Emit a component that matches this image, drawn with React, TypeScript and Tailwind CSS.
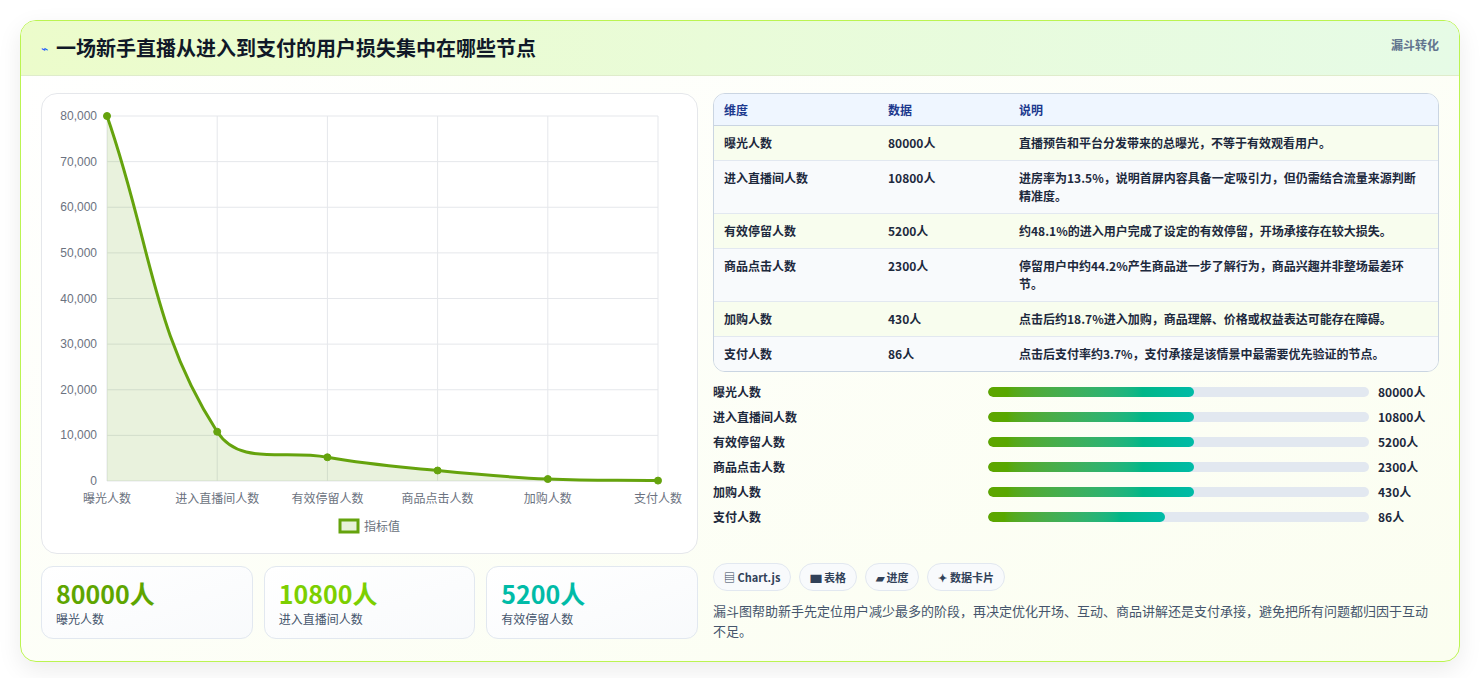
import React from "react";

const rows = [
  { name: "曝光人数", value: 80000, desc: "直播预告和平台分发带来的总曝光，不等于有效观看用户。" },
  { name: "进入直播间人数", value: 10800, desc: "进房率为13.5%，说明首屏内容具备一定吸引力，但仍需结合流量来源判断精准度。" },
  { name: "有效停留人数", value: 5200, desc: "约48.1%的进入用户完成了设定的有效停留，开场承接存在较大损失。" },
  { name: "商品点击人数", value: 2300, desc: "停留用户中约44.2%产生商品进一步了解行为，商品兴趣并非整场最差环节。" },
  { name: "加购人数", value: 430, desc: "点击后约18.7%进入加购，商品理解、价格或权益表达可能存在障碍。" },
  { name: "支付人数", value: 86, desc: "点击后支付率约3.7%，支付承接是该情景中最需要优先验证的节点。" },
];

const bars = [54, 54, 54, 54, 54, 46.5];

const font = { fontFamily: '"Noto Sans CJK SC", "Noto Sans", sans-serif' };

function buildPath(pts: [number, number][], t = 0.4, top = 22, bottom = 387) {
  const cps = pts.map((p, i) => {
    const prev = pts[i - 1] ?? p;
    const next = pts[i + 1] ?? p;
    const d01 = Math.hypot(p[0] - prev[0], p[1] - prev[1]);
    const d12 = Math.hypot(next[0] - p[0], next[1] - p[1]);
    const s01 = d01 / (d01 + d12 || 1);
    const s12 = d12 / (d01 + d12 || 1);
    const fa = t * s01, fb = t * s12;
    const clamp = (y: number) => Math.min(bottom, Math.max(top, y));
    return {
      a: [p[0] - fa * (next[0] - prev[0]), clamp(p[1] - fa * (next[1] - prev[1]))],
      b: [p[0] + fb * (next[0] - prev[0]), clamp(p[1] + fb * (next[1] - prev[1]))],
    };
  });
  let d = `M${pts[0][0]},${pts[0][1]}`;
  for (let i = 1; i < pts.length; i++) {
    d += ` C${cps[i - 1].b[0]},${cps[i - 1].b[1]} ${cps[i].a[0]},${cps[i].a[1]} ${pts[i][0]},${pts[i][1]}`;
  }
  return d;
}

function Chart() {
  const x0 = 65, x1 = 616, y0 = 22, y1 = 387;
  const pts: [number, number][] = rows.map((r, i) => [x0 + (i * (x1 - x0)) / 5, y1 - (r.value / 80000) * (y1 - y0)]);
  const line = buildPath(pts);
  const area = `${line} L${x1},${y1} L${x0},${y1} Z`;
  return (
    <svg width="657" height="460" className="block">
      {[0, 1, 2, 3, 4, 5, 6, 7, 8].map((k) => {
        const y = y1 - (k * (y1 - y0)) / 8;
        return (
          <g key={k}>
            <line x1={x0} x2={x1} y1={y} y2={y} stroke="#e5e7eb" />
            <text x={55} y={y + 4} textAnchor="end" fontSize="12" fill="#6b7280" fontFamily="Liberation Sans, sans-serif">
              {(k * 10000).toLocaleString("en-US")}
            </text>
          </g>
        );
      })}
      {pts.map((p, i) => (
        <g key={i}>
          <line x1={p[0]} x2={p[0]} y1={y0} y2={y1} stroke="#e5e7eb" />
          <text x={p[0]} y={409} textAnchor="middle" fontSize="12" fill="#6b7280" style={font}>
            {rows[i].name}
          </text>
        </g>
      ))}
      <path d={area} fill="#65a30d" fillOpacity="0.14" />
      <path d={line} fill="none" stroke="#65a30d" strokeWidth="3" />
      {pts.map((p, i) => (
        <circle key={i} cx={p[0]} cy={p[1]} r="3.5" fill="#65a30d" stroke="#65a30d" />
      ))}
      <rect x="298" y="426" width="18" height="12" fill="#e7f1d9" stroke="#65a30d" strokeWidth="3" />
      <text x="322" y="437" fontSize="12" fill="#6b7280" style={font}>指标值</text>
    </svg>
  );
}

export default function App() {
  return (
    <div className="w-[1480px] h-[678px] bg-white p-5" style={font}>
      <div className="rounded-2xl border border-lime-300 bg-gradient-to-br from-white to-[#fbfef0] shadow-[0_8px_24px_rgba(0,0,0,0.08)] overflow-hidden">
        <div className="h-[55px] flex items-center justify-between px-5 bg-gradient-to-r from-[#ecfccb] to-[#e6fbe6] border-b border-[#dfeccb]">
          <div className="flex items-center gap-2">
            <span className="text-[12px] text-blue-600">⌁</span>
            <h1 className="text-[20px] font-bold text-gray-900">一场新手直播从进入到支付的用户损失集中在哪些节点</h1>
          </div>
          <span className="self-start mt-4 text-xs font-semibold text-slate-500">漏斗转化</span>
        </div>
        <div className="flex gap-[15px] p-5 pt-[17px]">
          <div className="w-[657px] flex flex-col gap-3">
            <div className="rounded-2xl border border-gray-200 bg-white h-[461px] overflow-hidden">
              <Chart />
            </div>
            <div className="grid grid-cols-3 gap-[11px]">
              {[
                { v: "80000人", l: "曝光人数", c: "text-lime-600" },
                { v: "10800人", l: "进入直播间人数", c: "text-lime-500" },
                { v: "5200人", l: "有效停留人数", c: "text-teal-500" },
              ].map((s) => (
                <div key={s.l} className="h-[73px] rounded-xl border border-slate-200 bg-gradient-to-br from-white to-slate-50 px-[14px] pt-2">
                  <div className={`text-[25px] font-bold leading-[36px] ${s.c}`}>{s.v}</div>
                  <div className="text-xs text-slate-600">{s.l}</div>
                </div>
              ))}
            </div>
          </div>
          <div className="w-[728px] flex flex-col">
            <div className="rounded-xl border border-slate-300 overflow-hidden text-xs leading-[18px]">
              <div className="flex h-8 items-center bg-blue-50 border-b border-slate-300 font-semibold text-blue-900">
                <div className="w-[174px] pl-[10px]">维度</div>
                <div className="w-[131px]">数据</div>
                <div>说明</div>
              </div>
              {rows.map((r, i) => (
                <div key={r.name} className={`flex py-2 border-b border-slate-200 last:border-b-0 font-semibold text-slate-800 ${i % 2 === 0 ? "bg-[#f8fdee]" : "bg-slate-50"}`}>
                  <div className="w-[174px] pl-[10px]">{r.name}</div>
                  <div className="w-[131px]">{r.value}人</div>
                  <div className="flex-1 pr-3">{r.desc}</div>
                </div>
              ))}
            </div>
            <div className="mt-[11px] flex flex-col gap-[7px]">
              {rows.map((r, i) => (
                <div key={r.name} className="flex items-center h-[18px] text-xs font-semibold text-slate-800">
                  <div className="w-[275px]">{r.name}</div>
                  <div className="w-[381px] h-[10px] rounded-full bg-slate-200 overflow-hidden">
                    <div className="h-full rounded-full bg-gradient-to-r from-lime-600 to-teal-500" style={{ width: `${bars[i]}%` }} />
                  </div>
                  <div className="ml-[9px]">{r.value}人</div>
                </div>
              ))}
            </div>
            <div className="mt-[37px] flex gap-2 text-[11px] font-semibold text-slate-700">
              {["▤ Chart.js", "▆ 表格", "▰ 进度", "✦ 数据卡片"].map((c) => (
                <span key={c} className="h-7 px-[10px] flex items-center rounded-full border border-slate-200 bg-slate-50">{c}</span>
              ))}
            </div>
            <p className="mt-[10px] text-[13px] leading-[20px] text-slate-600">
              漏斗图帮助新手先定位用户减少最多的阶段，再决定优化开场、互动、商品讲解还是支付承接，避免把所有问题都归因于互动不足。
            </p>
          </div>
        </div>
      </div>
    </div>
  );
}
